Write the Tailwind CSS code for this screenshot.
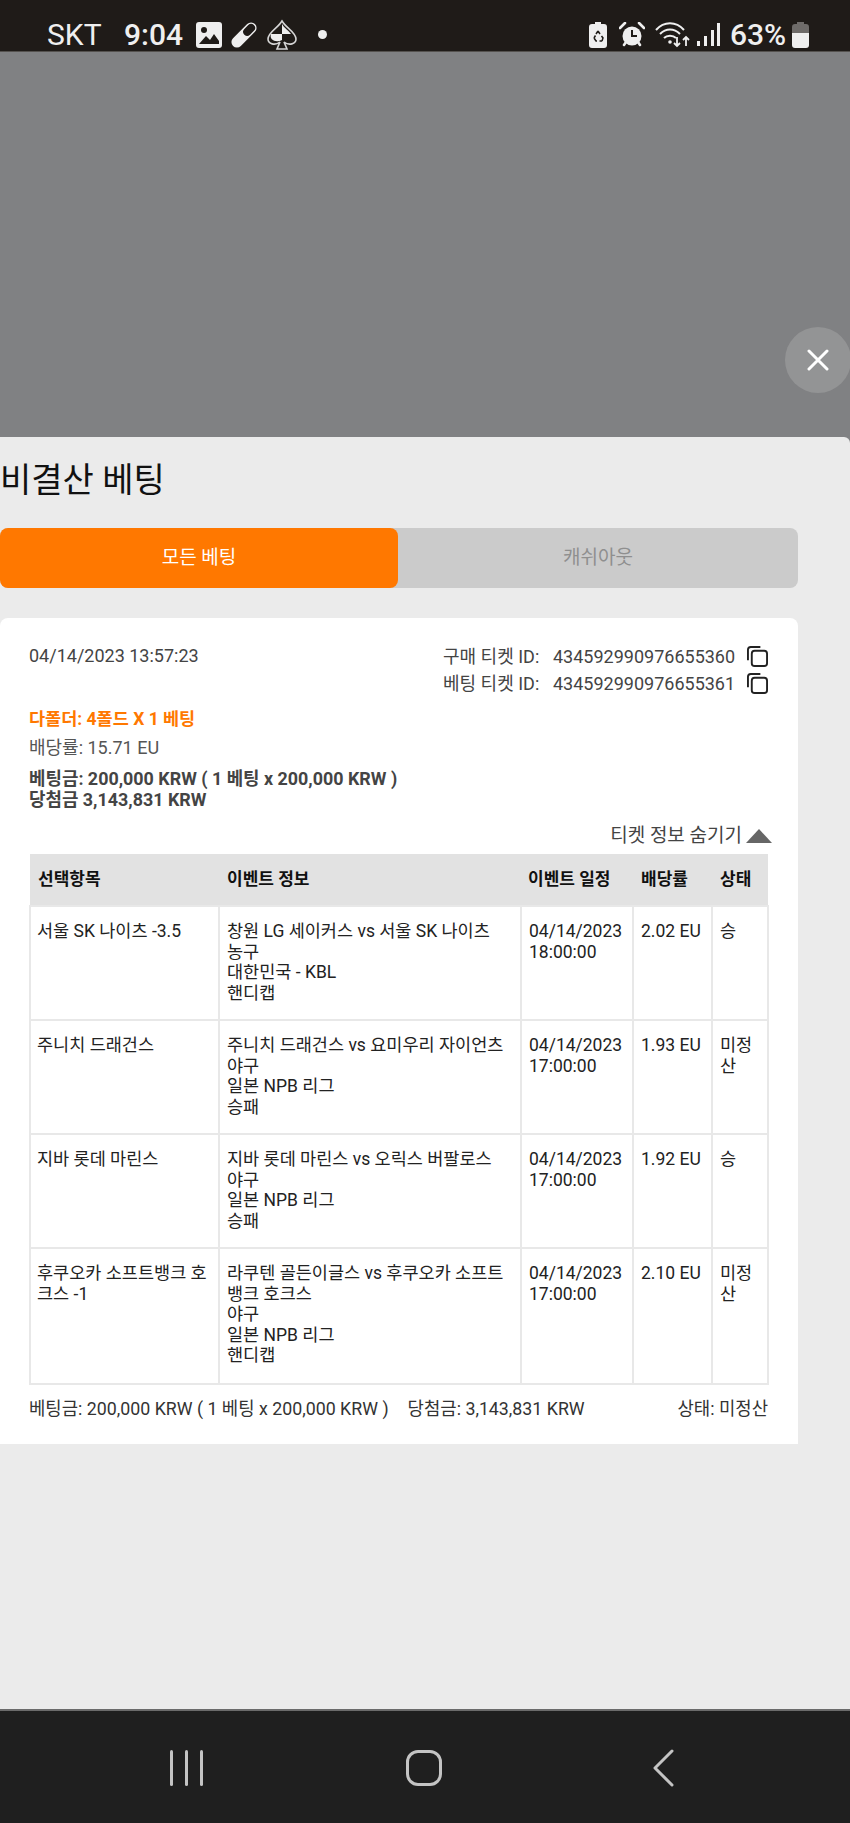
<!DOCTYPE html>
<html lang="ko">
<head>
<meta charset="UTF-8">
<title>비결산 베팅</title>
<script src="https://cdn.jsdelivr.net/npm/@tailwindcss/browser@4"></script>
</head>
<body class="bg-[#808183]">
<div class="w-[850px] h-[1823px] flex flex-col overflow-hidden font-['Roboto','Noto_Sans_CJK_KR',sans-serif]">

  <!-- status bar -->
  <div class="h-[52px] bg-[#1f1b18] flex items-center justify-between pl-[47px] pr-[41px] pt-[18px] text-[#efefef] border-b border-[#55524f] shrink-0">
    <div class="flex items-center">
      <span class="text-[30px] leading-none w-[77px]">SKT</span>
      <span class="text-[30px] leading-none font-medium w-[72px]">9:04</span>
      <svg class="w-[26px] h-[26px]" viewBox="0 0 26 26"><rect width="26" height="26" rx="3" fill="#efefef"/><circle cx="8" cy="8" r="3" fill="#1f1b18"/><path d="M3 22 L10 14 L14 18 L18 12 L23 19 V22 Z" fill="#1f1b18"/></svg>
      <svg class="w-[28px] h-[28px] ml-[8px]" viewBox="0 0 28 28"><g transform="rotate(-45 14 14)"><rect x="-1.5" y="8.5" width="31" height="11" rx="5.5" fill="#efefef"/><rect x="14.5" y="10" width="13.5" height="8" rx="4" fill="#1f1b18"/></g></svg>
      <svg class="w-[32px] h-[32px] ml-[8px]" viewBox="0 0 32 32"><path d="M16 2 C20 9 30 13 30 20 C30 25 23 27 18 23 L21 30 H11 L14 23 C9 27 2 25 2 20 C2 13 12 9 16 2 Z" fill="none" stroke="#d5d5d5" stroke-width="1.6"/><path d="M16 5 V15 H8 C10 11 14 9 16 5 Z M16 15 H27 C28 21 22 24 16 21 Z" fill="#1f1b18"/><path d="M16 15 H5 C3 21 10 24 16 21 Z M16 5 C18 9 22 11 25 15 H16 Z" fill="#efefef"/></svg>
      <div class="w-[9px] h-[9px] rounded-full bg-[#efefef] ml-[20px]"></div>
    </div>
    <div class="flex items-center">
      <svg class="w-[18px] h-[26px]" viewBox="0 0 18 26"><path d="M6 0 H12 V2 H15 Q18 2 18 5 V23 Q18 26 15 26 H3 Q0 26 0 23 V5 Q0 2 3 2 H6 Z" fill="#efefef"/><path d="M9 9 L11 12 M7 12 L9 9 M5 16 L6.5 13.5 M5 16 L7 19 H8 M13 19 H10.5 M13 19 L14 16 L12.5 14" fill="none" stroke="#1f1b18" stroke-width="1.5"/></svg>
      <svg class="w-[26px] h-[26px] ml-[12px]" viewBox="0 0 26 26"><circle cx="13" cy="14" r="9.5" fill="#efefef"/><path d="M13 8 V14 H18" fill="none" stroke="#1f1b18" stroke-width="2"/><path d="M1 6 L6 1 M25 6 L20 1 M5 23 L7 20 M21 23 L19 20" stroke="#efefef" stroke-width="2.6" stroke-linecap="round"/></svg>
      <svg class="w-[36px] h-[26px] ml-[10px]" viewBox="0 0 36 26"><g fill="none" stroke="#efefef" stroke-width="2"><path d="M1 8 C9 -1 21 -1 29 8"/><path d="M5 12 C11 6 19 6 25 12"/><path d="M9 16 C12 13 18 13 21 16"/></g><circle cx="15" cy="20" r="1.8" fill="#efefef"/><path d="M22 15 V24 M19 21 L22 24 L25 21 M31 24 V15 M28 18 L31 15 L34 18" fill="none" stroke="#efefef" stroke-width="1.8"/></svg>
      <svg class="w-[24px] h-[24px] ml-[6px]" viewBox="0 0 24 24"><rect x="0" y="18" width="3" height="5" fill="#efefef"/><rect x="7" y="13" width="3" height="10" fill="#efefef"/><rect x="14" y="7" width="3" height="16" fill="#efefef"/><rect x="20" y="0" width="3" height="23" fill="#efefef"/></svg>
      <span class="text-[30px] leading-none font-medium ml-[9px] w-[60px]">63%</span>
      <svg class="ml-[2px] w-[17px] h-[26px]" viewBox="0 0 17 26"><path d="M5 0 H12 V2 H14 Q17 2 17 5 V11 H0 V5 Q0 2 3 2 H5 Z" fill="#6e6b69"/><path d="M0 11 H17 V23 Q17 26 14 26 H3 Q0 26 0 23 Z" fill="#efefef"/></svg>
    </div>
  </div>

  <!-- dimmed area -->
  <div class="h-[385px] relative shrink-0">
    <div class="absolute left-[785px] top-[275px] w-[66px] h-[66px] rounded-full bg-[#939495] flex items-center justify-center">
      <svg class="w-[22px] h-[22px]" viewBox="0 0 22 22"><path d="M2 2 L20 20 M20 2 L2 20" stroke="#fff" stroke-width="3" stroke-linecap="round"/></svg>
    </div>
  </div>

  <!-- sheet -->
  <div class="flex-1 bg-[#ebebeb] rounded-tr-[6px] pr-[52px]">
    <h1 class="text-[34px] leading-[40px] text-[#111] mt-[23px]">비결산 베팅</h1>

    <div class="mt-[28px] h-[60px] flex bg-[#cbcbcb] rounded-[8px]">
      <div class="w-[398px] bg-[#ff7800] rounded-[8px] flex items-center justify-center text-white text-[19px]">모든 베팅</div>
      <div class="flex-1 flex items-center justify-center text-[#8f8f8f] text-[19px]">캐쉬아웃</div>
    </div>

    <div class="mt-[30px] bg-white rounded-t-[8px] h-[826px] pl-[29px] pr-[30px] pt-[27px] text-[#444]">
      <div class="flex justify-between h-[65px]">
        <div class="text-[18px] leading-[22px]">04/14/2023 13:57:23</div>
        <div class="text-[18px] leading-[27px] -mt-[2px]">
          <div class="flex items-center justify-end">
            <span class="w-[110px]">구매 티켓 ID:</span>
            <span class="w-[194px]">434592990976655360</span>
            <svg class="w-[21px] h-[21px]" viewBox="0 0 22 22" fill="none" stroke="#222" stroke-width="2"><path d="M1 15 V4 Q1 1 4 1 H14"/><rect x="5" y="5" width="16" height="16" rx="3" fill="#fff"/></svg>
          </div>
          <div class="flex items-center justify-end">
            <span class="w-[110px]">베팅 티켓 ID:</span>
            <span class="w-[194px]">434592990976655361</span>
            <svg class="w-[21px] h-[21px]" viewBox="0 0 22 22" fill="none" stroke="#222" stroke-width="2"><path d="M1 15 V4 Q1 1 4 1 H14"/><rect x="5" y="5" width="16" height="16" rx="3" fill="#fff"/></svg>
          </div>
        </div>
      </div>

      <div class="text-[17.5px] leading-[20px] font-bold text-[#ff7800] mt-[-1px]">다폴더: 4폴드 X 1 베팅</div>
      <div class="text-[18px] leading-[20px] mt-[9px] text-[#555]">배당률: 15.71 EU</div>
      <div class="text-[17.9px] leading-[21px] font-bold mt-[10px]">베팅금: 200,000 KRW ( 1 베팅 x 200,000 KRW )</div>
      <div class="text-[17.9px] leading-[21px] font-bold">당첨금 3,143,831 KRW</div>

      <div class="flex items-center justify-end mt-[8px] h-[36px] -mr-[4px] text-[19px] text-[#444]">
        <span>티켓 정보 숨기기</span>
        <svg class="w-[26px] h-[14px] ml-[4px]" viewBox="0 0 26 14"><path d="M13 0 L26 14 H0 Z" fill="#666"/></svg>
      </div>

      <table class="w-[738px] table-fixed border-collapse text-[17.5px] leading-[20.5px] text-[#222]">
        <colgroup>
          <col class="w-[189px]">
          <col class="w-[302px]">
          <col class="w-[112px]">
          <col class="w-[79px]">
          <col class="w-[56px]">
        </colgroup>
        <thead>
          <tr class="h-[52px] bg-[#e2e2e2] text-[#111] text-[17px] font-bold text-left">
            <th class="px-[8px] font-bold">선택항목</th>
            <th class="px-[8px] font-bold">이벤트 정보</th>
            <th class="px-[7px] font-bold">이벤트 일정</th>
            <th class="px-[8px] font-bold">배당률</th>
            <th class="px-[8px] font-bold">상태</th>
          </tr>
        </thead>
        <tbody>
          <tr class="h-[114px]">
            <td class="border-2 border-[#e8e8e8] px-[6px] pt-[14px] align-top">서울 SK 나이츠 -3.5</td>
            <td class="border-2 border-[#e8e8e8] px-[7px] pt-[14px] align-top">창원 LG 세이커스 vs 서울 SK 나이츠<br>농구<br>대한민국 - KBL<br>핸디캡</td>
            <td class="border-2 border-[#e8e8e8] px-[7px] pt-[14px] align-top">04/14/2023<br>18:00:00</td>
            <td class="border-2 border-[#e8e8e8] px-[7px] pt-[14px] align-top">2.02 EU</td>
            <td class="border-2 border-[#e8e8e8] px-[7px] pt-[14px] align-top">승</td>
          </tr>
          <tr class="h-[114px]">
            <td class="border-2 border-[#e8e8e8] px-[6px] pt-[14px] align-top">주니치 드래건스</td>
            <td class="border-2 border-[#e8e8e8] px-[7px] pt-[14px] align-top">주니치 드래건스 vs 요미우리 자이언츠<br>야구<br>일본 NPB 리그<br>승패</td>
            <td class="border-2 border-[#e8e8e8] px-[7px] pt-[14px] align-top">04/14/2023<br>17:00:00</td>
            <td class="border-2 border-[#e8e8e8] px-[7px] pt-[14px] align-top">1.93 EU</td>
            <td class="border-2 border-[#e8e8e8] px-[7px] pt-[14px] align-top">미정산</td>
          </tr>
          <tr class="h-[114px]">
            <td class="border-2 border-[#e8e8e8] px-[6px] pt-[14px] align-top">지바 롯데 마린스</td>
            <td class="border-2 border-[#e8e8e8] px-[7px] pt-[14px] align-top">지바 롯데 마린스 vs 오릭스 버팔로스<br>야구<br>일본 NPB 리그<br>승패</td>
            <td class="border-2 border-[#e8e8e8] px-[7px] pt-[14px] align-top">04/14/2023<br>17:00:00</td>
            <td class="border-2 border-[#e8e8e8] px-[7px] pt-[14px] align-top">1.92 EU</td>
            <td class="border-2 border-[#e8e8e8] px-[7px] pt-[14px] align-top">승</td>
          </tr>
          <tr class="h-[136px]">
            <td class="border-2 border-[#e8e8e8] px-[6px] pt-[14px] align-top">후쿠오카 소프트뱅크 호크스 -1</td>
            <td class="border-2 border-[#e8e8e8] px-[7px] pt-[14px] align-top">라쿠텐 골든이글스 vs 후쿠오카 소프트뱅크 호크스<br>야구<br>일본 NPB 리그<br>핸디캡</td>
            <td class="border-2 border-[#e8e8e8] px-[7px] pt-[14px] align-top">04/14/2023<br>17:00:00</td>
            <td class="border-2 border-[#e8e8e8] px-[7px] pt-[14px] align-top">2.10 EU</td>
            <td class="border-2 border-[#e8e8e8] px-[7px] pt-[14px] align-top">미정산</td>
          </tr>
        </tbody>
      </table>

      <div class="flex w-[739px] mt-[12px] text-[17.8px] leading-[24px] text-[#333]">
        <span>베팅금: 200,000 KRW ( 1 베팅 x 200,000 KRW )</span>
        <span class="ml-[19px]">당첨금: 3,143,831 KRW</span>
        <span class="ml-auto">상태: 미정산</span>
      </div>
    </div>
  </div>

  <!-- nav bar -->
  <div class="h-[114px] bg-[#1f1f1f] border-t-2 border-[#6b6b6b] flex items-start pt-[39px] relative shrink-0">
    <div class="ml-[170px] flex gap-[12px]">
      <div class="w-[3px] h-[36px] bg-[#c4c4c4] rounded-full"></div>
      <div class="w-[3px] h-[36px] bg-[#c4c4c4] rounded-full"></div>
      <div class="w-[3px] h-[36px] bg-[#c4c4c4] rounded-full"></div>
    </div>
    <div class="ml-[203px] w-[36px] h-[36px] rounded-[12px] border-[3px] border-[#c4c4c4]"></div>
    <svg class="ml-[210px] w-[22px] h-[38px] -mt-[1px]" viewBox="0 0 22 38"><path d="M20 2 L3 19 L20 36" fill="none" stroke="#c4c4c4" stroke-width="3" stroke-linecap="round" stroke-linejoin="round"/></svg>
  </div>
</div>
</body>
</html>
